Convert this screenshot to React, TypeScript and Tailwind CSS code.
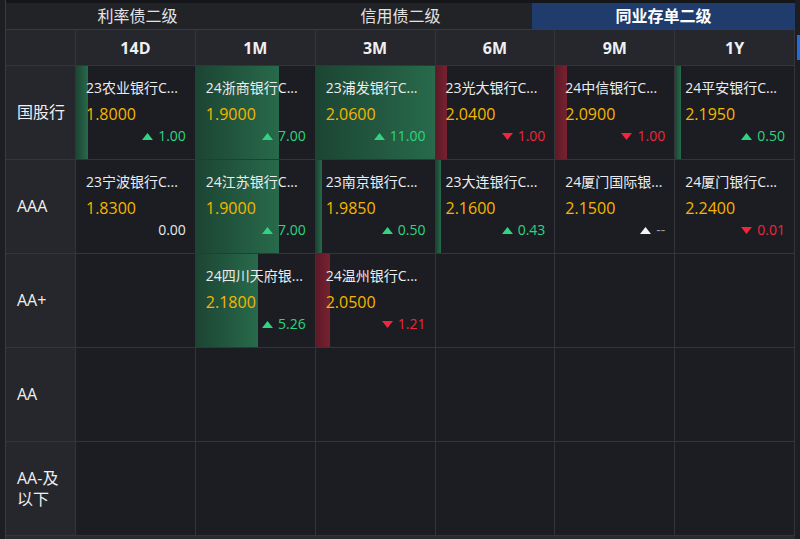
import React from 'react';

type Dir = 'up' | 'down' | 'flat' | 'none';

interface Quote {
  name: string;
  price: string;
  change: string;
  value: number;
  dir: Dir;
}

const tabs = ['利率债二级', '信用债二级', '同业存单二级'];
const terms = ['14D', '1M', '3M', '6M', '9M', '1Y'];

const rows: { label: string; cells: (Quote | null)[] }[] = [
  {
    label: '国股行',
    cells: [
      { name: '23农业银行C...', price: '1.8000', change: '1.00', value: 1, dir: 'up' },
      { name: '24浙商银行C...', price: '1.9000', change: '7.00', value: 7, dir: 'up' },
      { name: '23浦发银行C...', price: '2.0600', change: '11.00', value: 11, dir: 'up' },
      { name: '23光大银行C...', price: '2.0400', change: '1.00', value: 1, dir: 'down' },
      { name: '24中信银行C...', price: '2.0900', change: '1.00', value: 1, dir: 'down' },
      { name: '24平安银行C...', price: '2.1950', change: '0.50', value: 0.5, dir: 'up' },
    ],
  },
  {
    label: 'AAA',
    cells: [
      { name: '23宁波银行C...', price: '1.8300', change: '0.00', value: 0, dir: 'flat' },
      { name: '24江苏银行C...', price: '1.9000', change: '7.00', value: 7, dir: 'up' },
      { name: '23南京银行C...', price: '1.9850', change: '0.50', value: 0.5, dir: 'up' },
      { name: '23大连银行C...', price: '2.1600', change: '0.43', value: 0.43, dir: 'up' },
      { name: '24厦门国际银...', price: '2.1500', change: '--', value: 0, dir: 'none' },
      { name: '24厦门银行C...', price: '2.2400', change: '0.01', value: 0.01, dir: 'down' },
    ],
  },
  {
    label: 'AA+',
    cells: [
      null,
      { name: '24四川天府银...', price: '2.1800', change: '5.26', value: 5.26, dir: 'up' },
      { name: '24温州银行C...', price: '2.0500', change: '1.21', value: 1.21, dir: 'down' },
      null,
      null,
      null,
    ],
  },
  { label: 'AA', cells: [null, null, null, null, null, null] },
  { label: 'AA-及以下', cells: [null, null, null, null, null, null] },
];

const Triangle = ({ dir }: { dir: Dir }) => {
  if (dir === 'flat') return null;
  const color = dir === 'up' ? '#2ed47f' : dir === 'down' ? '#f0263c' : '#f2f2f2';
  return (
    <svg width="11" height="7" viewBox="0 0 11 7" className="mr-[5px]">
      {dir === 'down' ? (
        <polygon points="0,0 11,0 5.5,7" fill={color} />
      ) : (
        <polygon points="0,7 11,7 5.5,0" fill={color} />
      )}
    </svg>
  );
};

const Cell = ({ q }: { q: Quote | null }) => {
  if (!q) return <div className="border-r border-b border-[#33353b] bg-[#1b1d22]" />;
  const pct = Math.min(q.value / 10, 1) * 100;
  const changeColor =
    q.dir === 'up' ? 'text-[#2ed47f]' : q.dir === 'down' ? 'text-[#f0263c]' : q.dir === 'none' ? 'text-[#9a9ca3]' : 'text-[#e8e8ea]';
  return (
    <div className="relative border-r border-b border-[#33353b] bg-[#1b1d22]">
      {pct > 0 && (
        <div
          className={`absolute left-0 top-0 bottom-0 ${
            q.dir === 'down'
              ? 'bg-gradient-to-r from-[#5e1a27] to-[#772230]'
              : 'bg-gradient-to-r from-[#1c4533] to-[#286a4b]'
          }`}
          style={{ width: `${pct}%` }}
        />
      )}
      <div className="relative flex flex-col pt-[12px] pl-[10px] pr-[9px]">
        <div className="text-[14px] leading-[20px] text-[#ececee] whitespace-nowrap">{q.name}</div>
        <div className="mt-[5px] text-[16px] leading-[22px] text-[#f7b500]">{q.price}</div>
        <div className={`mt-[1px] flex items-center justify-end text-[14px] leading-[20px] ${changeColor}`}>
          <Triangle dir={q.dir} />
          <span>{q.change}</span>
        </div>
      </div>
    </div>
  );
};

export default function App() {
  return (
    <div
      className="flex h-[539px] w-[800px] overflow-hidden bg-[#1b1c20] text-white"
      style={{ fontFamily: '"Open Sans", "Noto Sans CJK SC", sans-serif' }}
    >
      <div className="w-[6px] border-r border-[#3a3b40] bg-[#1d1e22]" />
      <div className="flex w-[789px] flex-col">
        <div className="h-[3px] bg-[#151619]" />
        <div className="grid h-[27px] grid-cols-3 border-b border-[#3a3b40] bg-[#222327]">
          {tabs.map((t, i) => (
            <div
              key={t}
              className={`flex items-center justify-center text-[16px] ${
                i === 2 ? 'bg-[#1f3c6d] font-bold text-white' : 'text-[#e2e2e4]'
              }`}
            >
              {t}
            </div>
          ))}
        </div>
        <div className="grid flex-1 grid-cols-[70px_repeat(6,1fr)] grid-rows-[36px_repeat(5,94px)]">
          <div className="border-r border-b border-[#33353b] bg-[#26272c]" />
          {terms.map((t) => (
            <div
              key={t}
              className="flex items-center justify-center border-r border-b border-[#33353b] bg-[#26272c] text-[16px] font-bold text-[#f0f0f2]"
            >
              {t}
            </div>
          ))}
          {rows.map((r) => (
            <React.Fragment key={r.label}>
              <div className="flex items-center border-r border-b border-[#33353b] bg-[#26272c] pl-[11px] pr-[6px] text-[16px] leading-[21px] text-[#f0f0f2]">
                {r.label}
              </div>
              {r.cells.map((c, i) => (
                <Cell key={i} q={c} />
              ))}
            </React.Fragment>
          ))}
        </div>
        <div className="h-[3px] bg-[#2a2b30]" />
      </div>
      <div className="flex w-[5px] flex-col bg-[#1d1e22]">
        <div className="ml-auto mt-[35px] h-[25px] w-[3px] bg-[#1f6ce0]" />
      </div>
    </div>
  );
}
